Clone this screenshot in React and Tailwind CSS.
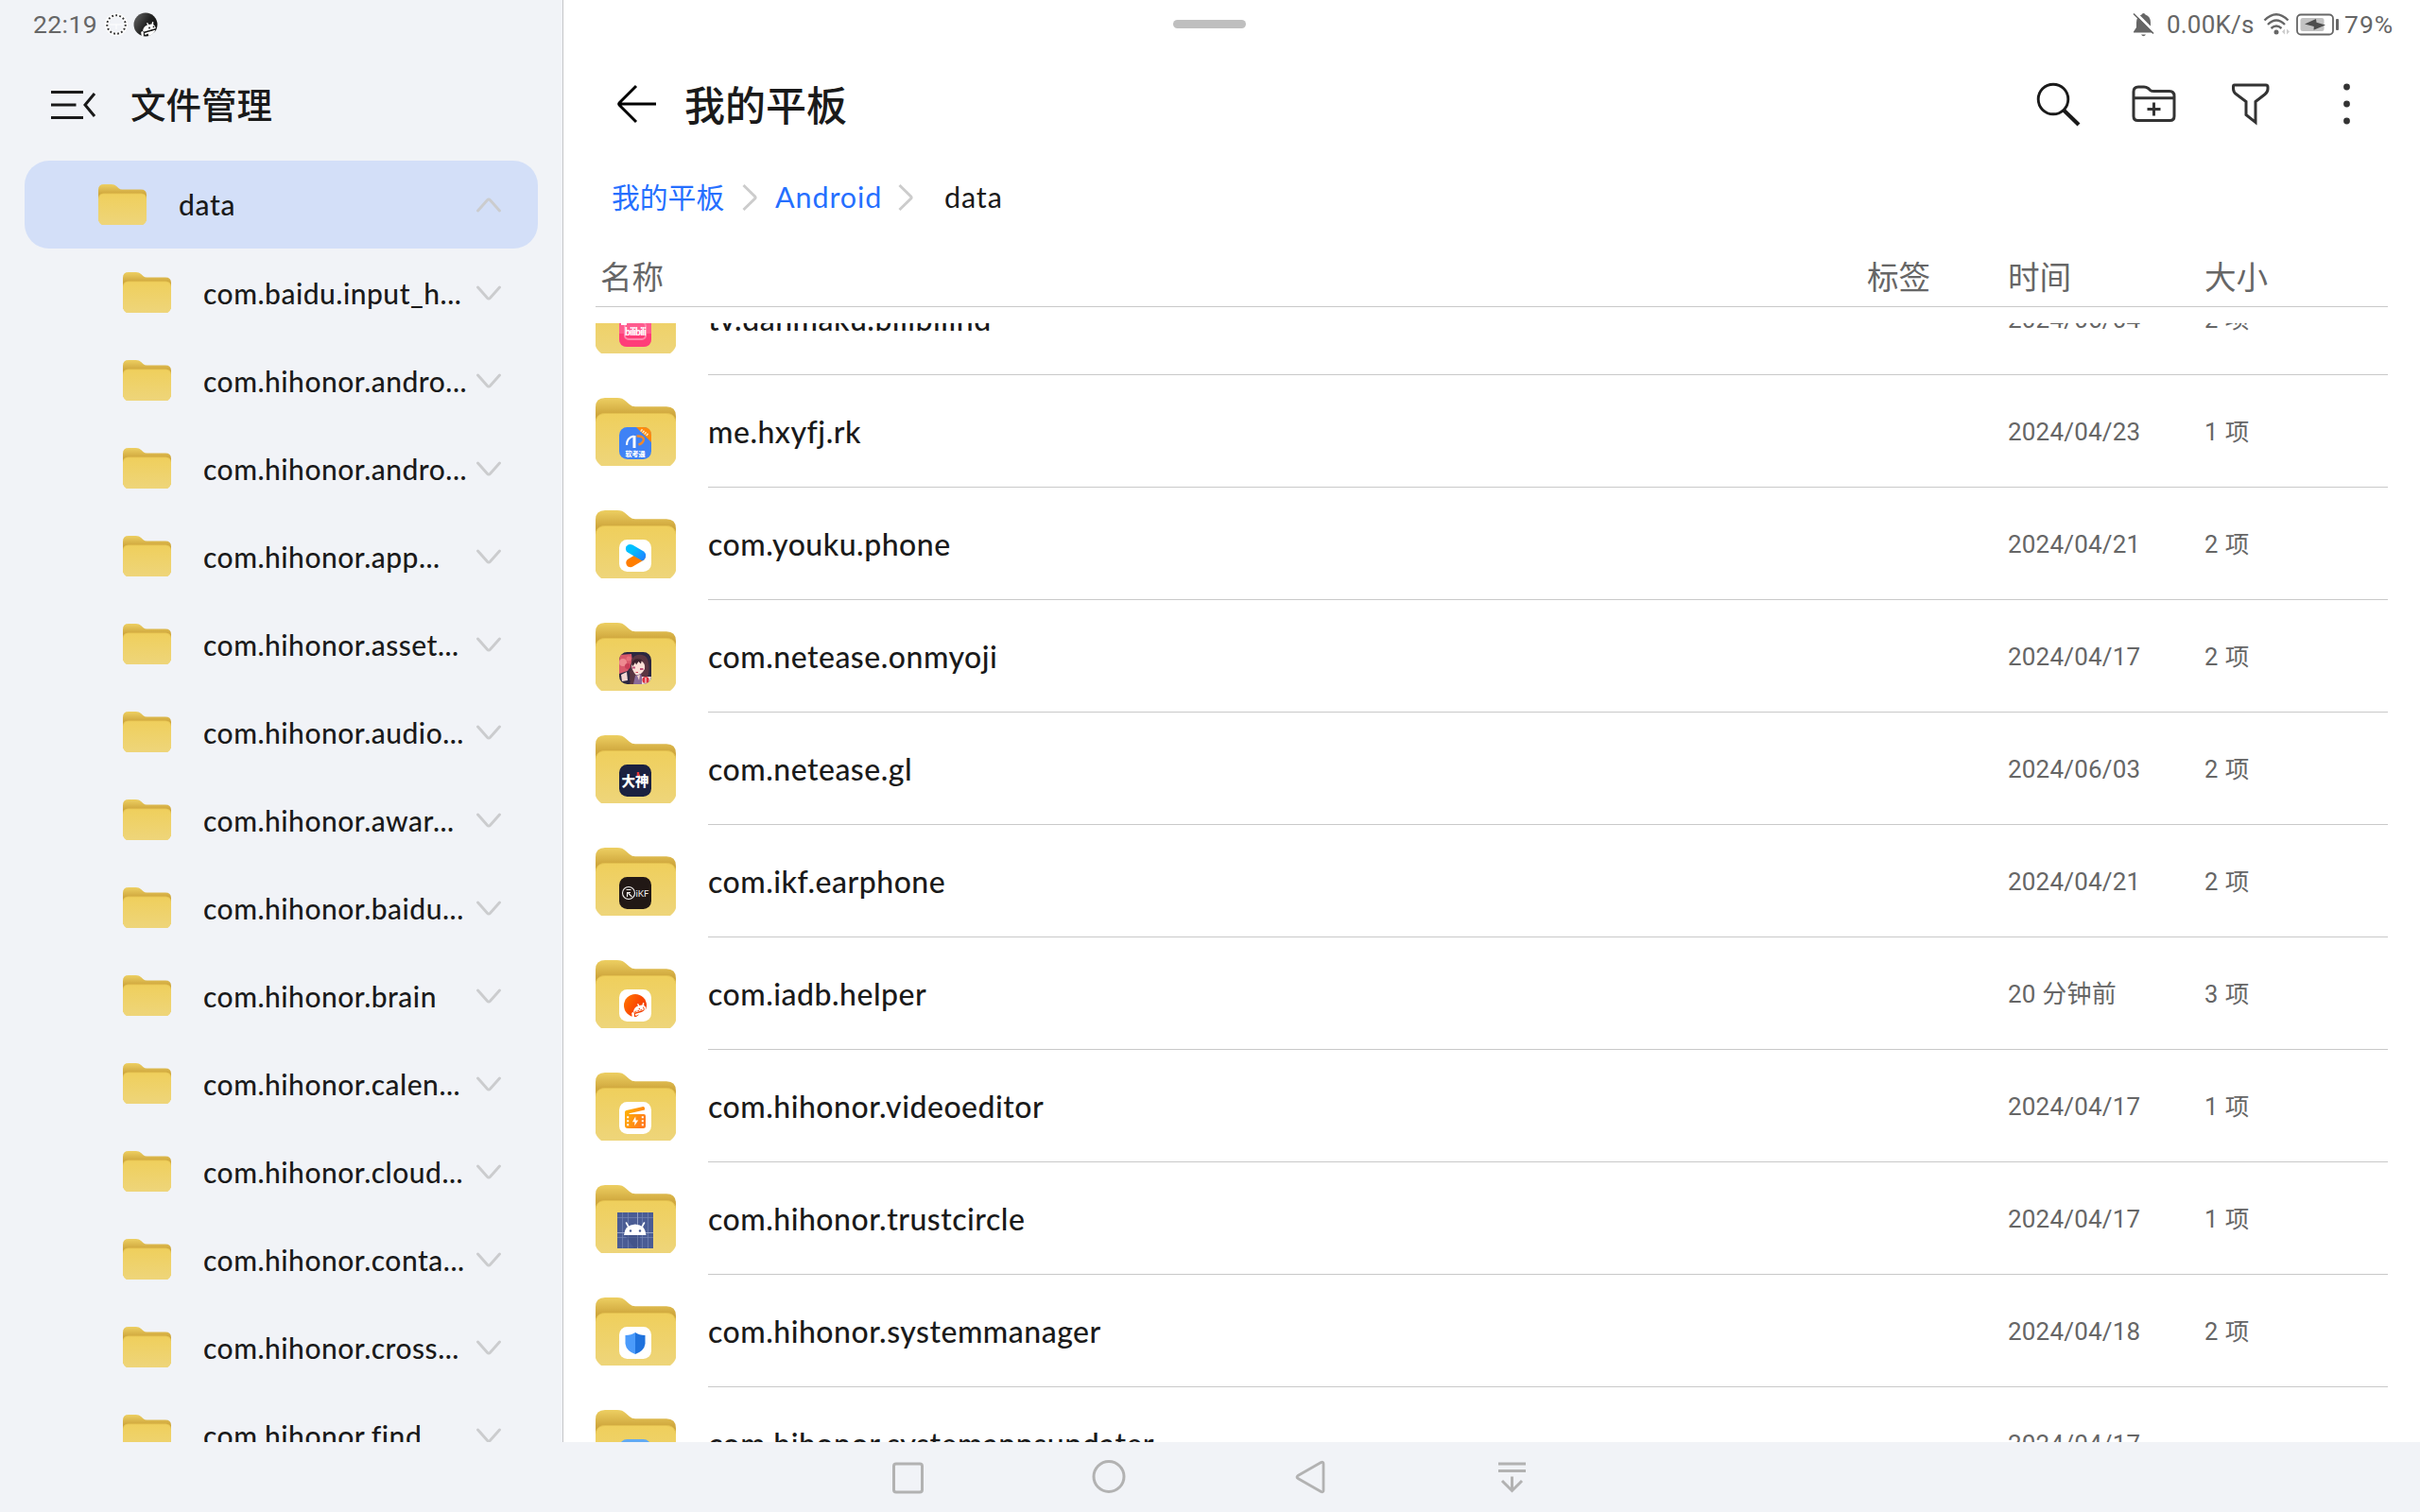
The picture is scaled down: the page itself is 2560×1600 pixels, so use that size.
const SIDEBAR = [
  'com.baidu.input_h...',
  'com.hihonor.andro...',
  'com.hihonor.andro...',
  'com.hihonor.app...',
  'com.hihonor.asset...',
  'com.hihonor.audio...',
  'com.hihonor.awar...',
  'com.hihonor.baidu...',
  'com.hihonor.brain',
  'com.hihonor.calen...',
  'com.hihonor.cloud...',
  'com.hihonor.conta...',
  'com.hihonor.cross...',
  'com.hihonor.find...',
];

function FolderShape() {
  return (
    <>
      <defs>
        <linearGradient id="folderBack" x1="0" y1="0" x2="0" y2="1">
          <stop offset="0" stopColor="#edcf62" />
          <stop offset="0.6" stopColor="#d0a83e" />
          <stop offset="1" stopColor="#cda43a" />
        </linearGradient>
        <linearGradient id="folderFront" x1="0" y1="0" x2="0" y2="1">
          <stop offset="0" stopColor="#efcf5c" />
          <stop offset="1" stopColor="#eed57a" />
        </linearGradient>
      </defs>
      <path d="M0 28V10Q0 0 10 0H23C27 0 29.500 1.200 32 3.400L36 7Q38.500 9.300 42 9.300H75Q85 9.300 85 19.300V28Z" fill="url(#folderBack)" />
      <path d="M0 26Q0 16.500 10 16.500H75Q85 16.500 85 26V64Q84 68 79 72H6Q1 68 0 64Z" fill="url(#folderFront)" />
      <path d="M1 22Q3 16.500 10 16.500H75Q82 16.500 84 22" fill="none" stroke="#e2bf4e" strokeWidth="1" />
    </>
  );
}

function SmallFolder() {
  return (
    <svg className="h-[43px] w-[51px] shrink-0" viewBox="0 0 85 72" preserveAspectRatio="none">
      <FolderShape />
    </svg>
  );
}

function Tile({ fill }) {
  return <rect width="34" height="34" rx="8.500" fill={fill} />;
}

function AndroidPeek({ fill }) {
  return (
    <g fill={fill}>
      <path d="M11 19.500Q12 14.500 16 13.500L15 11.500L16.200 11L17.300 13Q19.500 12.400 20.500 12.500L21 10L22.300 10.200L22.200 13Q24.500 14 24.800 17L12.500 20.500Z" />
      <path d="M12.800 22L24.800 18.600Q22 24.500 17 25L16.800 22.500L13.500 24Z" />
      <path d="M9.200 21Q11 19 11.800 21V25.500H9.800Z" />
    </g>
  );
}

const ICONS = {
  bili: (
    <g transform="translate(25 31)">
      <Tile fill="#ff5c8e" />
      <path d="M0 20H34V25.500Q34 34 25.500 34H8.500Q0 34 0 25.500Z" fill="#ff3d79" />
      <rect x="6" y="8" width="22" height="18" rx="4" fill="none" stroke="#ff86ac" strokeWidth="2" />
      <text x="17" y="22" textAnchor="middle" fontSize="10.500" fontWeight="900" fontFamily="Lato" letterSpacing="-0.800" fill="#fff">bilibili</text>
      <path d="M2 10H8" stroke="#fff" strokeWidth="2" />
    </g>
  ),
  rk: (
    <g transform="translate(25 31)">
      <Tile fill="#3f82f5" />
      <path d="M18 0H25.500Q34 0 34 8.500V16Z" fill="#ff8a0c" />
      <path d="M23 3L31 9" stroke="#ffe3bd" strokeWidth="3" strokeDasharray="1.500 1" />
      <path d="M8 19Q8 11 15.500 9.500" fill="none" stroke="#fff" strokeWidth="2.200" />
      <path d="M16 9V22" stroke="#fff" strokeWidth="3" />
      <path d="M18.500 9.500Q25.500 9 26 13Q25.500 17 20.500 18.500" fill="none" stroke="#f0892b" strokeWidth="2.400" />
      <text x="17" y="30.500" textAnchor="middle" fontSize="7" fontWeight="900" fontFamily="Noto Sans CJK SC" fill="#fff">软考通</text>
    </g>
  ),
  youku: (
    <g transform="translate(25 31)">
      <defs>
        <linearGradient id="ykBlue" x1="0" y1="0" x2="1" y2="0.700">
          <stop offset="0.400" stopColor="#00c0ff" />
          <stop offset="1" stopColor="#1f86ff" />
        </linearGradient>
      </defs>
      <Tile fill="#fff" />
      <path d="M12 24.500L23 18" stroke="#ff7d00" strokeWidth="9.500" strokeLinecap="round" />
      <path d="M14 5.600L25.500 12.200Q29.600 15 27.500 19.500Q26 22.500 24 22.300L9.400 13.800Q5.500 11 7.600 7.200Q10 3.800 14 5.600Z" fill="url(#ykBlue)" />
    </g>
  ),
  onmyoji: (
    <g transform="translate(25 31)">
      <defs>
        <clipPath id="onClip"><rect width="34" height="34" rx="8.500" /></clipPath>
      </defs>
      <g clipPath="url(#onClip)">
        <rect width="34" height="34" fill="#2c2740" />
        <path d="M0 3L13 2L14 10L9 20L0 23Z" fill="#d9596b" />
        <circle cx="4" cy="11" r="4" fill="#ee8a90" />
        <circle cx="9" cy="15" r="3" fill="#c93e58" />
        <circle cx="10" cy="7" r="2.500" fill="#e8707c" />
        <path d="M13 8Q18 0 27 4Q33 8 31 24L27 32L11 30Z" fill="#5a3542" />
        <path d="M13 13Q17 8 23 9Q28 12 27 18Q23 25 18 24.500Q13 19 13 13Z" fill="#fbe0d8" />
        <path d="M13 13Q15 5 24 8L23 12.500L20.500 10L18 13.500L17 11L14.500 15Z" fill="#3c212d" />
        <path d="M14 16.500H17M22 18H25.500" stroke="#c0547a" strokeWidth="1.800" />
        <path d="M17.500 21.500H20" stroke="#d3455c" strokeWidth="1" />
        <path d="M10 18Q13 28 11 34H20L15 24Z" fill="#5a3542" />
        <path d="M17 25L23 23L26 34H15Z" fill="#8a6a98" />
        <path d="M19 25L22 24L21 30Z" fill="#f6d5cc" />
        <path d="M2 24L8 21L9 30L3 31Z" fill="#f3d6d2" />
        <path d="M24 26H34V34H24Z" fill="#e9d8dc" />
        <circle cx="28" cy="29.500" r="3.600" fill="#d92f3f" />
        <path d="M28 27V33" stroke="#fff" strokeWidth="1" />
      </g>
    </g>
  ),
  gl: (
    <g transform="translate(25 31)">
      <Tile fill="#1b2140" />
      <text x="17" y="23.300" textAnchor="middle" fontSize="14.500" fontWeight="900" fontFamily="Noto Sans CJK SC" fill="#fff">大神</text>
      <rect x="18.800" y="8" width="2.400" height="4" fill="#e5383b" />
    </g>
  ),
  ikf: (
    <g transform="translate(25 31)">
      <Tile fill="#211815" />
      <circle cx="10" cy="17" r="6.500" fill="none" stroke="#f4f2f1" strokeWidth="1.100" />
      <path d="M7.500 13.500H12.500M8.500 21V16.500H12M9.500 17L13.500 21" fill="none" stroke="#f4f2f1" strokeWidth="1.100" />
      <text x="17.500" y="20.500" fontSize="9.500" fontFamily="Lato" fontWeight="400" fill="#f4f2f1">iKF</text>
    </g>
  ),
  iadb: (
    <g transform="translate(25 31)">
      <defs>
        <linearGradient id="iadbG" x1="0" y1="0" x2="1" y2="0.600">
          <stop offset="0" stopColor="#ff7a00" />
          <stop offset="0.600" stopColor="#fb4a00" />
          <stop offset="1" stopColor="#f03c00" />
        </linearGradient>
      </defs>
      <Tile fill="#fff" />
      <circle cx="17" cy="17" r="12" fill="url(#iadbG)" />
      <path d="M29 20L17 30H24L30 25Z" fill="#fff" />
      <g transform="translate(4 4)">
        <AndroidPeek fill="#fff" />
        <circle cx="17.300" cy="16.500" r="0.700" fill="#f03c00" />
        <circle cx="21.800" cy="15.300" r="0.700" fill="#f03c00" />
      </g>
      <path d="M16.500 23.500L28.500 20.300" stroke="#f03c00" strokeWidth="0.900" strokeDasharray="2 1" />
    </g>
  ),
  video: (
    <g transform="translate(25 31)">
      <defs>
        <linearGradient id="veG" x1="0" y1="0" x2="1" y2="0.600">
          <stop offset="0" stopColor="#ffb700" />
          <stop offset="1" stopColor="#ff7a1c" />
        </linearGradient>
      </defs>
      <Tile fill="#fff" />
      <path d="M6 10.800Q6 9.500 7.500 9L25.500 5Q26.800 5 27 6.500V8.500L10.500 12.200V13H26Q28 13 28 15V25.500Q28 28 25.500 28H9Q6 28 6 25Z" fill="url(#veG)" />
      <path d="M8.200 15.200h2v2h-2zM8.200 19.200h2v2h-2zM8.200 23.200h2v2h-2zM23.800 15.200h2v2h-2zM23.800 19.200h2v2h-2zM23.800 23.200h2v2h-2z" fill="#fff" />
      <path d="M17.200 15.500L14 21.200H16.500L16.200 25.300L20.200 19.500H17.600Z" fill="#fff" />
    </g>
  ),
  trust: (
    <g transform="translate(23 29)">
      <rect width="38" height="38" fill="#4a5c94" />
      <path d="M0 5.500H38M0 26.500H38M5.500 0V38M11.500 0V38M26.500 0V38M32.500 0V38" stroke="#7485b5" strokeWidth="0.700" />
      <path d="M0 21.500H38M21.500 0V38" stroke="#93a0c6" strokeWidth="1" />
      <path d="M8 24H24V36L18 38Z" fill="#3c4c80" opacity="0.500" />
      <path d="M7 24Q8 13 19 12.500Q29.500 13 30.500 24Z" fill="#fff" />
      <path d="M12 15.500L9.500 11M26 15.500L28.500 11" stroke="#fff" strokeWidth="1.600" strokeLinecap="round" />
      <circle cx="14" cy="19.500" r="1.200" fill="#4a5c94" />
      <circle cx="24" cy="19.500" r="1.200" fill="#4a5c94" />
    </g>
  ),
  shield: (
    <g transform="translate(25 31)">
      <Tile fill="#fff" />
      <path d="M17 6Q21 8.800 27.500 9V18Q26.500 25.500 17 29Z" fill="#1f72dd" />
      <path d="M17 6Q13 8.800 6.500 9V18Q7.500 25.500 17 29Z" fill="#4b9bfb" />
    </g>
  ),
  updater: (
    <g transform="translate(25 31)">
      <Tile fill="#62aaf2" />
    </g>
  ),
};

const FILES = [
  ['tv.danmaku.bilibilihd', '2024/06/04', '2 项', 'bili'],
  ['me.hxyfj.rk', '2024/04/23', '1 项', 'rk'],
  ['com.youku.phone', '2024/04/21', '2 项', 'youku'],
  ['com.netease.onmyoji', '2024/04/17', '2 项', 'onmyoji'],
  ['com.netease.gl', '2024/06/03', '2 项', 'gl'],
  ['com.ikf.earphone', '2024/04/21', '2 项', 'ikf'],
  ['com.iadb.helper', '20 分钟前', '3 项', 'iadb'],
  ['com.hihonor.videoeditor', '2024/04/17', '1 项', 'video'],
  ['com.hihonor.trustcircle', '2024/04/17', '1 项', 'trust'],
  ['com.hihonor.systemmanager', '2024/04/18', '2 项', 'shield'],
  ['com.hihonor.systemappsupdater', '2024/04/17', '', 'updater'],
];

function Chevron({ up }) {
  return (
    <svg className="h-[16px] w-[28px] shrink-0" viewBox="0 0 28 16" fill="none" stroke="#cbccce" strokeWidth="2.900" strokeLinecap="round" strokeLinejoin="round">
      <path d={up ? 'M2.500 14L12.500 2.800Q14 1.200 15.500 2.800L25.500 14' : 'M2.500 2L12.500 13.200Q14 14.800 15.500 13.200L25.500 2'} />
    </svg>
  );
}

function Sidebar() {
  return (
    <aside className="flex w-[596px] shrink-0 flex-col overflow-hidden border-r border-[#c4c5c8] bg-[#f1f3f7]">
      <div className="flex h-[52px] shrink-0 items-center pl-[35px] font-['Roboto',sans-serif] text-[26.5px] tracking-[0.4px] text-[#666]">
        <span className="mb-[1px] w-[76px]">22:19</span>
        <svg className="h-[26px] w-[24px]" viewBox="0 0 24 26">
          <circle cx="12" cy="13" r="10" fill="none" stroke="#fff" strokeWidth="4" />
          <path d="M5 13H19M12 13V18" stroke="#fff" strokeWidth="1" />
          <circle cx="12" cy="13" r="9.700" fill="none" stroke="#333" strokeWidth="2" strokeDasharray="1.800 2.260" />
        </svg>
        <svg className="ml-[5px] h-[26px] w-[28px]" viewBox="0 0 28 26">
          <defs>
            <linearGradient id="ballG" x1="0" y1="0" x2="1" y2="0.600">
              <stop offset="0" stopColor="#6a6a6a" />
              <stop offset="0.600" stopColor="#222" />
              <stop offset="1" stopColor="#111" />
            </linearGradient>
          </defs>
          <circle cx="14" cy="13" r="12.500" fill="url(#ballG)" />
          <AndroidPeek fill="#fff" />
          <path d="M18 25L27 19V26H18Z" fill="#f1f3f7" />
          <path d="M13.500 21L25 18" stroke="#111" strokeWidth="1" strokeDasharray="3 2" />
          <circle cx="18" cy="16.500" r="0.900" fill="#111" />
          <circle cx="22.500" cy="15.300" r="0.900" fill="#111" />
        </svg>
      </div>
      <div className="flex h-[118px] shrink-0 items-center pl-[54px]">
        <svg className="h-[36px] w-[48px]" viewBox="0 0 48 36" fill="none" stroke="#1a1a1a" strokeWidth="3">
          <path d="M0 4.500H34M0 18H26.500M0 31.500H34M46 6L36 18L46 30" />
        </svg>
        <h1 className="mb-[5px] ml-[36px] font-['Noto_Sans_CJK_SC',sans-serif] text-[37.5px] leading-[44px] font-medium text-[#1a1a1a]">文件管理</h1>
      </div>
      <div className="mx-[26px] flex h-[93px] shrink-0 items-center rounded-[26px] bg-[#d3dff8] pr-[38px] pl-[78px]">
        <SmallFolder />
        <span className="mb-[2px] ml-[34px] flex-1 text-[30px] font-medium tracking-[0.7px]">data</span>
        <Chevron up />
      </div>
      {SIDEBAR.map((name, i) => (
        <div key={i} className="flex h-[93px] shrink-0 items-center pr-[64px] pl-[130px]">
          <SmallFolder />
          <span className="ml-[34px] flex-1 text-[30px] font-medium tracking-[0.5px] whitespace-nowrap">{name}</span>
          <Chevron />
        </div>
      ))}
    </aside>
  );
}

function StatusRight() {
  return (
    <div className="flex items-center text-[#666]">
      <svg className="h-[26px] w-[24px]" viewBox="0 0 24 26">
        <path d="M11.500 1Q13 1 13.500 2.600Q19 4.500 19 11V16L22 20.500V21.500H1V20.500L4 16V11Q4 4.500 9.500 2.600Q10 1 11.500 1Z" fill="#666" />
        <path d="M9 23.500H14Q13 25.200 11.500 25.200Q10 25.200 9 23.500Z" fill="#666" />
        <path d="M2.500 0L23.500 21.500" stroke="#fff" strokeWidth="3" />
        <path d="M1 1.500L22 22.500" stroke="#666" strokeWidth="1.600" />
      </svg>
      <span className="mb-[1px] ml-[12px] w-[100px] tracking-[0.2px]">0.00K/s</span>
      <svg className="ml-[2px] h-[26px] w-[30px]" viewBox="0 0 30 26" fill="none" stroke="#666" strokeWidth="2.400">
        <path d="M1.500 8.500Q14 -4 26.500 8.500M5 13Q14 4 23 13M8.500 17Q14 12 19.500 17" />
        <circle cx="14" cy="21" r="2.500" fill="#666" stroke="none" />
        <path d="M20 20.500L23 17.500V23.500ZM28 20.500L25 17.500V23.500Z" fill="#ccc" stroke="none" />
      </svg>
      <svg className="ml-[5px] h-[24px] w-[46px]" viewBox="0 0 46 24">
        <rect x="1" y="1.500" width="38" height="21" rx="4" fill="none" stroke="#666" strokeWidth="1.800" />
        <rect x="4.500" y="5" width="25" height="14" rx="2.500" fill="#c2c2c2" />
        <path d="M9 11.500L21 6L21.500 9.800L31 12.500L18.500 17.800L18.800 14Z" fill="#4d4d4d" />
        <rect x="42" y="6" width="3" height="12" rx="1" fill="#666" />
      </svg>
      <span className="mb-[1px] ml-[5px] w-[53px] text-[26.500px] tracking-[1px]">79%</span>
    </div>
  );
}

function Crumb() {
  return (
    <svg className="h-[30px] w-[18px]" viewBox="0 0 18 30" fill="none" stroke="#ccc" strokeWidth="3">
      <path d="M2.500 2L14.500 13.700Q15.700 15 14.500 16.300L2.500 28" />
    </svg>
  );
}

function Main() {
  return (
    <main className="flex min-w-0 flex-1 flex-col bg-white">
      <div className="grid h-[52px] shrink-0 grid-cols-[645px_77px_1fr] items-center pr-[27px] font-['Roboto',sans-serif] text-[26px] text-[#666]">
        <span />
        <span className="mb-[1px] h-[9px] rounded-full bg-[#bfbfbf]" />
        <div className="flex justify-end"><StatusRight /></div>
      </div>
      <div className="flex h-[118px] shrink-0 items-center pl-[56px]">
        <svg className="mb-[2px] h-[42px] w-[44px]" viewBox="0 0 44 42" fill="none" stroke="#000" strokeWidth="3">
          <path d="M21 2L3.500 19.500Q2 21 3.500 22.500L21 40M3 21H42" />
        </svg>
        <h2 className="mb-[5px] ml-[28px] flex-1 font-['Noto_Sans_CJK_SC',sans-serif] text-[43px] leading-[50px] font-medium text-[#1a1a1a]">我的平板</h2>
        <div className="flex items-center">
          <svg className="h-[48px] w-[48px]" viewBox="0 0 48 48" fill="none" stroke="#1a1a1a">
            <circle cx="19" cy="18" r="15.800" strokeWidth="2.900" />
            <path d="M30 29.500L46 45" strokeWidth="4.200" />
          </svg>
          <svg className="ml-[54px] h-[48px] w-[48px]" viewBox="0 0 48 48" fill="none" stroke="#333" strokeWidth="3">
            <path d="M2 36V10Q2 5 7 5H13Q15.500 5 17.500 6.500L19.500 8.300Q21 9.500 23.500 9.500H40Q45 9.500 45 14.500V36Q45 40.500 40.500 40.500H6.500Q2 40.500 2 36ZM2 16.800H45M23.500 21.500V35.500M16.500 28.500H30.500" />
          </svg>
          <svg className="ml-[56px] h-[48px] w-[44px]" viewBox="0 0 44 48" fill="none" stroke="#333" strokeWidth="3">
            <path d="M4.500 3H38Q40 3 40 5V7Q40 10.500 37 12.700L27 20.500V42.500L17 34.500V20.500L7 13Q3.500 10.500 3.500 7V4.500Q3.500 3 4.500 3Z" />
          </svg>
          <svg className="mr-[72px] ml-[74px] h-[48px] w-[11px]" viewBox="0 0 11 48" fill="#333">
            <circle cx="5.500" cy="5" r="3.400" />
            <circle cx="5.500" cy="23" r="3.400" />
            <circle cx="5.500" cy="41" r="3.400" />
          </svg>
        </div>
      </div>
      <nav className="flex h-[78px] shrink-0 items-center pl-[51px] text-[30.5px] tracking-[0.9px] text-[#256fff]">
        <span className="mb-[4px] w-[137px] font-['Noto_Sans_CJK_SC',sans-serif] text-[29.8px] leading-[40px] tracking-normal">我的平板</span>
        <Crumb />
        <span className="mb-[2px] ml-[18px] w-[129px]">Android</span>
        <Crumb />
        <span className="mb-[2px] ml-[32px] text-[#1a1a1a]">data</span>
      </nav>
      <div className="mr-[34px] ml-[34px] grid h-[77px] shrink-0 grid-cols-[1345px_149px_208px_1fr] items-end border-b border-[#c9c9c9] pb-[12px] font-['Noto_Sans_CJK_SC',sans-serif] text-[33.6px] leading-[40px] text-[#666]">
        <span className="pl-[5px]">名称</span>
        <span>标签</span>
        <span>时间</span>
        <span>大小</span>
      </div>
      <div className="mt-[17px] min-h-0 flex-1 overflow-hidden">
        <div className="-mt-[64px] pr-[34px] pl-[34px]">
          {FILES.map(([name, date, size, icon]) => (
            <div key={name} className="flex h-[119px] items-stretch">
              <div className="flex w-[119px] shrink-0 items-center">
                <svg className="h-[72px] w-[85px]" viewBox="0 0 85 72">
                  <FolderShape />
                  {ICONS[icon]}
                </svg>
              </div>
              <div className="grid flex-1 grid-cols-[1375px_208px_1fr] items-center border-b border-[#c9c9c9]">
                <span className="pt-[1px] text-[32px] font-medium tracking-[0.5px]">{name}</span>
                <span className="pt-[2px] font-['Roboto','Noto_Sans_CJK_SC',sans-serif] text-[26px] leading-[36px] tracking-[0.2px] text-[#666]">{date}</span>
                <span className="pt-[2px] font-['Roboto','Noto_Sans_CJK_SC',sans-serif] text-[25.5px] leading-[36px] text-[#666] [word-spacing:1px]">{size}</span>
              </div>
            </div>
          ))}
        </div>
      </div>
    </main>
  );
}

function NavBar() {
  return (
    <footer className="flex h-[74px] shrink-0 items-center justify-center bg-[#f1f3f7] pr-[2px]">
      <div className="flex w-[213px] justify-center">
        <svg className="h-[40px] w-[40px]" viewBox="0 0 40 40" fill="none" stroke="#b2b2b2" strokeWidth="3">
          <rect x="5.500" y="6" width="30" height="30" rx="2.500" />
        </svg>
      </div>
      <div className="flex w-[213px] justify-center">
        <svg className="h-[40px] w-[40px]" viewBox="0 0 40 40" fill="none" stroke="#b2b2b2" strokeWidth="3">
          <circle cx="20" cy="19.500" r="16" />
        </svg>
      </div>
      <div className="flex w-[213px] justify-center">
        <svg className="h-[40px] w-[40px]" viewBox="0 0 40 40" fill="none" stroke="#b2b2b2" strokeWidth="2.800" strokeLinejoin="round">
          <path d="M31.500 4.500Q34 3.500 34 6V34Q34 36.500 31.500 35.500L7 21.500Q5 20 7 18.500Z" />
        </svg>
      </div>
      <div className="flex w-[213px] justify-center">
        <svg className="h-[40px] w-[40px]" viewBox="0 0 40 40" fill="none" stroke="#b2b2b2" strokeWidth="3">
          <path d="M6 6H35M6 13.500H35M20.500 19.500V34M10 24L20.500 34.500L31 24" />
        </svg>
      </div>
    </footer>
  );
}

export default function App() {
  return (
    <div className="flex h-[1600px] w-[2560px] flex-col overflow-hidden bg-[#f1f3f7] font-['Lato','Noto_Sans_CJK_SC',sans-serif] leading-[40px] text-[#1a1a1a]">
      <div className="flex min-h-0 flex-1">
        <Sidebar />
        <Main />
      </div>
      <NavBar />
    </div>
  );
}
